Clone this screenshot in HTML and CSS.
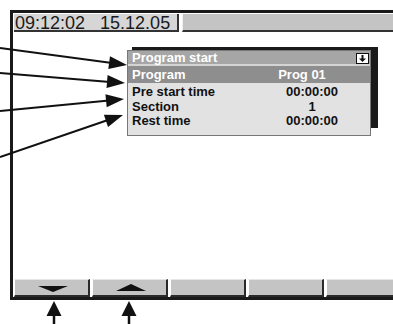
FILE: index.html
```html
<!DOCTYPE html>
<html>
<head>
<meta charset="utf-8">
<link rel="stylesheet" href="styles.css">
</head>
<body>
<div class="screen">
  <div class="frame">
    <div class="header">
      <div class="clock">09:12:02   15.12.05</div>
      <div class="statusbar"></div>
    </div>
    <div class="main">
      <div class="dialog">
        <div class="dlg-title">
          <span>Program start</span>
          <span class="dlg-icon">
            <svg width="13" height="11" viewBox="0 0 13 11">
              <rect x="0.5" y="0.5" width="12" height="10" fill="#fff" stroke="#111"/>
              <rect x="5.5" y="2" width="2" height="4" fill="#111"/>
              <polygon points="3,5.5 10,5.5 6.5,9" fill="#111"/>
            </svg>
          </span>
        </div>
        <div class="dlg-row dlg-selected">
          <span class="lbl">Program</span>
          <span class="val">Prog 01</span>
        </div>
        <div class="dlg-body">
          <div class="dlg-row"><span class="lbl">Pre start time</span><span class="val">00:00:00</span></div>
          <div class="dlg-row"><span class="lbl">Section</span><span class="val">1</span></div>
          <div class="dlg-row"><span class="lbl">Rest time</span><span class="val">00:00:00</span></div>
        </div>
      </div>
    </div>
    <div class="softkeys">
      <div class="key"><span class="tri-down"></span></div>
      <div class="key"><span class="tri-up"></span></div>
      <div class="key"></div>
      <div class="key"></div>
      <div class="key"></div>
    </div>
  </div>
  <svg class="annot" width="393" height="324" viewBox="0 0 393 324">
    <g stroke="#111" stroke-width="2" fill="none">
      <line x1="0" y1="48" x2="112" y2="63"/>
      <line x1="0" y1="73" x2="110" y2="82"/>
      <line x1="0" y1="111" x2="109" y2="100.5"/>
      <line x1="0" y1="157" x2="108" y2="120"/>
      <line x1="54" y1="312" x2="54" y2="324" stroke-width="2.5"/>
      <line x1="129" y1="312" x2="129" y2="324" stroke-width="2.5"/>
    </g>
    <g fill="#111">
      <polygon points="127,65 108.3,69.05 110,56.17"/>
      <polygon points="125,83 106.54,88.05 107.58,75.09"/>
      <polygon points="124,99 106.71,107.2 105.45,94.26"/>
      <polygon points="123,115 108.06,126.97 103.86,114.67"/>
      <polygon points="54,301 46.5,316 61.5,316"/>
      <polygon points="129,301 121.5,316 136.5,316"/>
    </g>
  </svg>
</div>
</body>
</html>
```
FILE: styles.css
```css
html {
  background: #fff;
}

html, body {
  margin: 0;
  padding: 0;
  width: 393px;
  height: 324px;
  overflow: hidden;
}

.screen {
  position: relative;
  width: 393px;
  height: 324px;
  overflow: hidden;
  padding: 10px 0 0 10px;
  box-sizing: border-box;
  font-family: "Liberation Sans", Arial, sans-serif;
}

.frame {
  width: 400px;
  height: 283px;
  border: 3px solid #1a1a1a;
  border-right: none;
  padding: 1px 0 0 1px;
  display: flex;
  flex-direction: column;
}

.header {
  display: flex;
  height: 18px;
  gap: 3px;
}

.clock {
  width: 165px;
  height: 18px;
  box-sizing: border-box;
  background: #d6d6d6;
  border-right: 2px solid #333;
  border-bottom: 2px solid #333;
  padding-left: 1px;
  font-size: 18px;
  line-height: 18px;
  white-space: pre;
  color: #1a1a1a;
}

.statusbar {
  flex: 1;
  box-sizing: border-box;
  background: #c4c4c4;
  border-left: 1px solid #f0f0f0;
  border-bottom: 2px solid #333;
}

.main {
  flex: 1;
  padding: 18px 0 0 113px;
}

.dialog {
  position: relative;
  width: 244px;
  box-sizing: border-box;
  border: 1px solid #777;
  background: #e2e2e2;
  font-size: 13px;
  font-weight: bold;
}

.dialog::before {
  content: "";
  position: absolute;
  left: 4px;
  top: -4px;
  width: 246px;
  height: 81px;
  background: #1a1a1a;
  z-index: -1;
}

.dlg-title {
  display: flex;
  justify-content: space-between;
  align-items: flex-start;
  height: 13px;
  line-height: 13px;
  background: #a6a6a6;
  color: #fff;
  padding: 0 1px 0 4px;
  border-bottom: 2px solid #d4d4d4;
}

.dlg-icon {
  display: flex;
  margin-top: 2px;
}

.dlg-row {
  display: grid;
  grid-template-columns: 1fr 116px;
  height: 14.5px;
  line-height: 14.5px;
  padding-left: 4px;
  color: #111;
}

.dlg-row .val {
  text-align: center;
}

.dlg-selected {
  height: 17px;
  line-height: 17px;
  background: #8e8e8e;
  color: #fff;
  grid-template-columns: 1fr 96px;
  padding-right: 20px;
}

.dlg-body {
  padding: 2px 0 6.5px;
}

.softkeys {
  display: grid;
  grid-template-columns: repeat(5, 76px);
  gap: 2px;
  height: 18px;
}

.key {
  box-sizing: border-box;
  background: #c4c4c4;
  border-top: 1px solid #e6e6e6;
  border-left: 1px solid #fff;
  border-right: 2px solid #2a2a2a;
  border-bottom: 2px solid #2a2a2a;
  display: flex;
  align-items: center;
  justify-content: center;
}

.tri-down {
  width: 0;
  height: 0;
  border-left: 15px solid transparent;
  border-right: 15px solid transparent;
  border-top: 6px solid #111;
  margin: 3px 0 0 2px;
}

.tri-up {
  width: 0;
  height: 0;
  border-left: 15px solid transparent;
  border-right: 15px solid transparent;
  border-bottom: 7px solid #111;
  margin: 0 0 1px 2px;
}

.annot {
  position: absolute;
  left: 0;
  top: 0;
  pointer-events: none;
}
```
